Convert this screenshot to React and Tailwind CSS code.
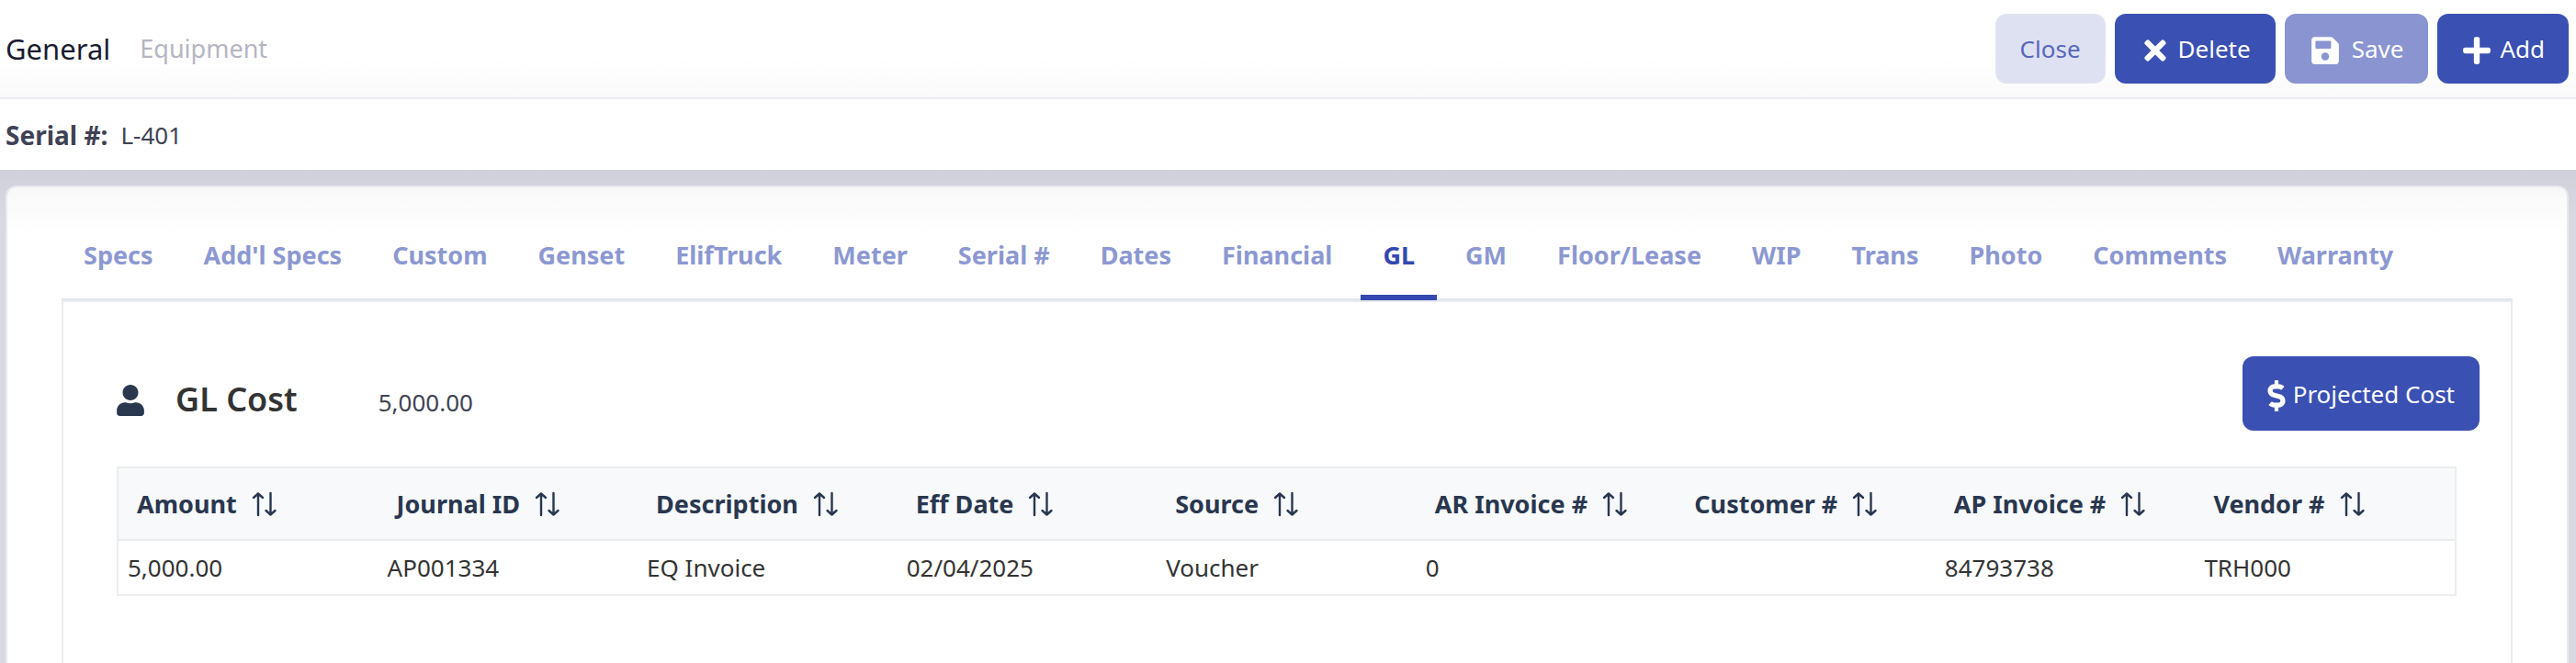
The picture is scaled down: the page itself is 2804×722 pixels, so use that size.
import { useState } from 'react';
import { FaTimes, FaSave, FaPlus, FaDollarSign, FaUser } from 'react-icons/fa';

const tabs = [
  'Specs', "Add'l Specs", 'Custom', 'Genset', 'ElifTruck', 'Meter', 'Serial #', 'Dates', 'Financial',
  'GL', 'GM', 'Floor/Lease', 'WIP', 'Trans', 'Photo', 'Comments', 'Warranty',
];

const columns = [
  'Amount', 'Journal ID', 'Description', 'Eff Date', 'Source',
  'AR Invoice #', 'Customer #', 'AP Invoice #', 'Vendor #',
];

const rows = [
  ['5,000.00', 'AP001334', 'EQ Invoice', '02/04/2025', 'Voucher', '0', '', '84793738', 'TRH000'],
];

const SortIcon = () => (
  <svg className="h-7 w-7 shrink-0" viewBox="0 0 28 28" fill="none" stroke="currentColor" strokeWidth="2.4" strokeLinecap="round" strokeLinejoin="round" aria-hidden="true">
    <path d="M7 26V2.500M2 7L7 2.500 12 7" />
    <path d="M20.500 2v23.500M15.500 21l5 4.500 5-4.500" />
  </svg>
);

const App = () => {
  const [activeTab, setActiveTab] = useState('GL');

  return (
    <div className="min-h-screen flex flex-col bg-[#d9d9e3] font-['Noto_Sans',sans-serif] text-[26px] leading-9 text-[#3f4254]">
      <header className="flex items-center justify-between h-[108px] pl-[6px] pr-2 border-b-2 border-[#ebebf0] bg-linear-to-b from-white from-60% to-[#fafafa]">
        <div className="flex items-center gap-8">
          <h1 className="text-[31px] text-[#181c32]">General</h1>
          <span className="text-[27px] text-[#b5b5c3]">Equipment</span>
        </div>
        <div className="flex gap-[10px]">
          <button type="button" className="h-[76px] px-[25px] rounded-xl border-2 border-[#e1e3ef] bg-[#dee1f2] text-[#5867ba]">Close</button>
          <button type="button" className="flex items-center gap-2 h-[76px] px-[27px] rounded-xl bg-[#3a50b2] text-white">
            <FaTimes className="mt-1 text-[34px]" /> Delete
          </button>
          <button type="button" disabled className="flex items-center gap-3 h-[76px] px-[27px] rounded-xl bg-[#8994d0] text-white">
            <FaSave className="mt-1 text-[34px]" /> Save
          </button>
          <button type="button" className="flex items-center gap-2 h-[76px] px-[26px] rounded-xl bg-[#3a50b2] text-white">
            <FaPlus className="mt-1 text-[34px]" /> Add
          </button>
        </div>
      </header>

      <div className="flex items-center gap-[14px] h-[77px] px-[6px] bg-white">
        <span className="text-[28px] font-bold">Serial #:</span>
        <span>L-401</span>
      </div>

      <main className="grow flex flex-col pt-[17px] pl-[6px] pr-2 bg-linear-to-b from-[#d0d0db] to-[#d9d9e3] to-10%">
        <div className="grow flex flex-col px-[59px] rounded-t-xl border-2 border-b-0 border-[#e8e8ee] bg-linear-to-b from-[#f8f8f8] to-white to-10%">
          <div role="tablist" className="flex gap-[7px] h-[123px] border-b-2 border-[#e2e5ec] text-[27px] font-bold whitespace-nowrap">
            {tabs.map((tab) => (
              <button
                key={tab}
                type="button"
                role="tab"
                aria-selected={tab === activeTab}
                onClick={() => setActiveTab(tab)}
                className={
                  tab === activeTab
                    ? 'px-6 pt-[54px] pb-6 -mb-[2px] border-b-6 border-[#3448b0] text-[#3448b0]'
                    : 'px-6 pt-[54px] pb-6 -mb-[2px] border-b-6 border-transparent text-[#8c98d1]'
                }
              >
                {tab}
              </button>
            ))}
          </div>

          <section className="grow pt-[59px] pl-[58px] pr-[34px] border-2 border-b-0 border-[#ebebf2]">
            <div className="flex items-center justify-between h-[81px]">
              <div className="flex items-baseline pt-[14px]">
                <FaUser className="self-center w-[30px] text-[34px] text-[#29374f]" aria-hidden="true" />
                <h2 className="ml-[34px] text-4xl font-semibold text-[#333]">GL Cost</h2>
                <span className="ml-[88px]">5,000.00</span>
              </div>
              <button type="button" className="flex items-center gap-2 h-full px-[27px] rounded-xl bg-[#3a50b2] text-white">
                <FaDollarSign className="mt-1 w-5 text-[34px]" /> Projected Cost
              </button>
            </div>

            <div className="mt-[39px] mr-[25px]">
              <table className="w-full table-fixed border-separate border-spacing-0 border-2 border-[#ebedf0] text-left">
                <thead className="bg-[#f8f9fb] text-[27px] text-[#29374f]">
                  <tr>
                    {columns.map((column) => (
                      <th key={column} className="h-[79px] pl-5 border-b-2 border-[#e9ebee] font-bold">
                        <span className="flex items-center gap-4 whitespace-nowrap">
                          {column}
                          <SortIcon />
                        </span>
                      </th>
                    ))}
                  </tr>
                </thead>
                <tbody className="text-[#333]">
                  {rows.map((row) => (
                    <tr key={row[1]}>
                      {row.map((cell, i) => (
                        <td key={columns[i]} className="h-[58px] pl-[10px]">{cell}</td>
                      ))}
                    </tr>
                  ))}
                </tbody>
              </table>
            </div>
          </section>
        </div>
      </main>
    </div>
  );
};

export default App;
